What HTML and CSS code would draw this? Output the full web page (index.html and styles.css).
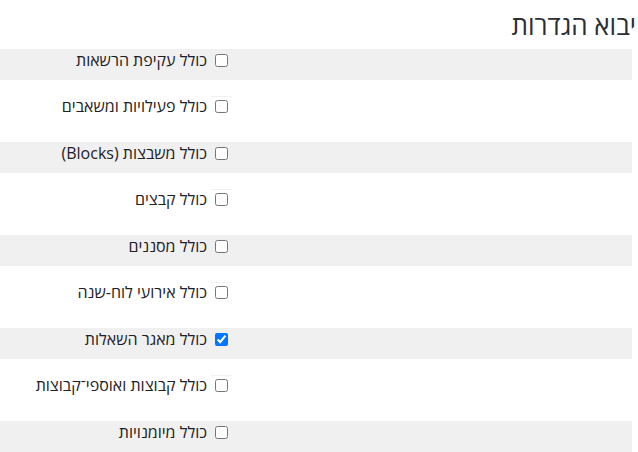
FILE: index.html
```html
<!DOCTYPE html>
<html lang="he" dir="rtl">
<head>
<meta charset="utf-8">
<link rel="stylesheet" href="styles.css">
</head>
<body>
<h2 class="title">יבוא הגדרות</h2>
<div class="settings">
  <div class="row row-alt">
    <label class="item"><input type="checkbox"><span>כולל עקיפת הרשאות</span></label>
  </div>
  <div class="row row-plain">
    <div class="cell"><div class="rule"></div><label class="item"><input type="checkbox"><span>כולל פעילויות ומשאבים</span></label></div>
  </div>
  <div class="row row-alt">
    <label class="item"><input type="checkbox"><span>כולל משבצות (Blocks)</span></label>
  </div>
  <div class="row row-plain">
    <div class="cell"><div class="rule"></div><label class="item"><input type="checkbox"><span>כולל קבצים</span></label></div>
  </div>
  <div class="row row-alt">
    <label class="item"><input type="checkbox"><span>כולל מסננים</span></label>
  </div>
  <div class="row row-plain">
    <div class="cell"><div class="rule"></div><label class="item"><input type="checkbox"><span>כולל אירועי לוח-שנה</span></label></div>
  </div>
  <div class="row row-alt">
    <label class="item"><input type="checkbox" checked><span>כולל מאגר השאלות</span></label>
  </div>
  <div class="row row-plain">
    <div class="cell"><div class="rule"></div><label class="item"><input type="checkbox"><span>כולל קבוצות ואוספי־קבוצות</span></label></div>
  </div>
  <div class="row row-alt">
    <label class="item"><input type="checkbox"><span>כולל מיומנויות</span></label>
  </div>
</div>
</body>
</html>
```
FILE: styles.css
```css
html, body {
  margin: 0;
  padding: 0;
  background: #ffffff;
  overflow: hidden;
}
body {
  font-family: "Open Sans", "Liberation Sans", "DejaVu Sans", sans-serif;
  color: #1d2125;
  width: 638px;
  height: 452px;
}
.title {
  margin: 0;
  padding: 10px 2px 0 0;
  height: 49px;
  box-sizing: border-box;
  font-size: 26px;
  font-weight: normal;
  line-height: 30px;
  color: #2b2f33;
}
.settings {
  width: 632px;
  margin-right: 6px;
  margin-left: 0;
}
.row {
  display: flex;
  align-items: flex-start;
  padding-right: 404px;
  box-sizing: border-box;
}
.row-alt {
  background: #f0f0f0;
  height: 31px;
  padding-top: 5px;
}
.row-plain {
  background: #ffffff;
  height: 62px;
  padding-top: 16px;
}
.cell {
  display: flex;
  flex-direction: column;
  align-items: flex-start;
}
.rule {
  width: 21px;
  height: 1px;
  background: #f1f1f1;
  margin-right: -4px;
  margin-bottom: 3px;
}
.item {
  display: flex;
  align-items: center;
  gap: 8px;
  font-size: 16px;
  line-height: 13px;
  white-space: nowrap;
}
.item input {
  margin: 0;
  width: 13px;
  height: 13px;
}
```
